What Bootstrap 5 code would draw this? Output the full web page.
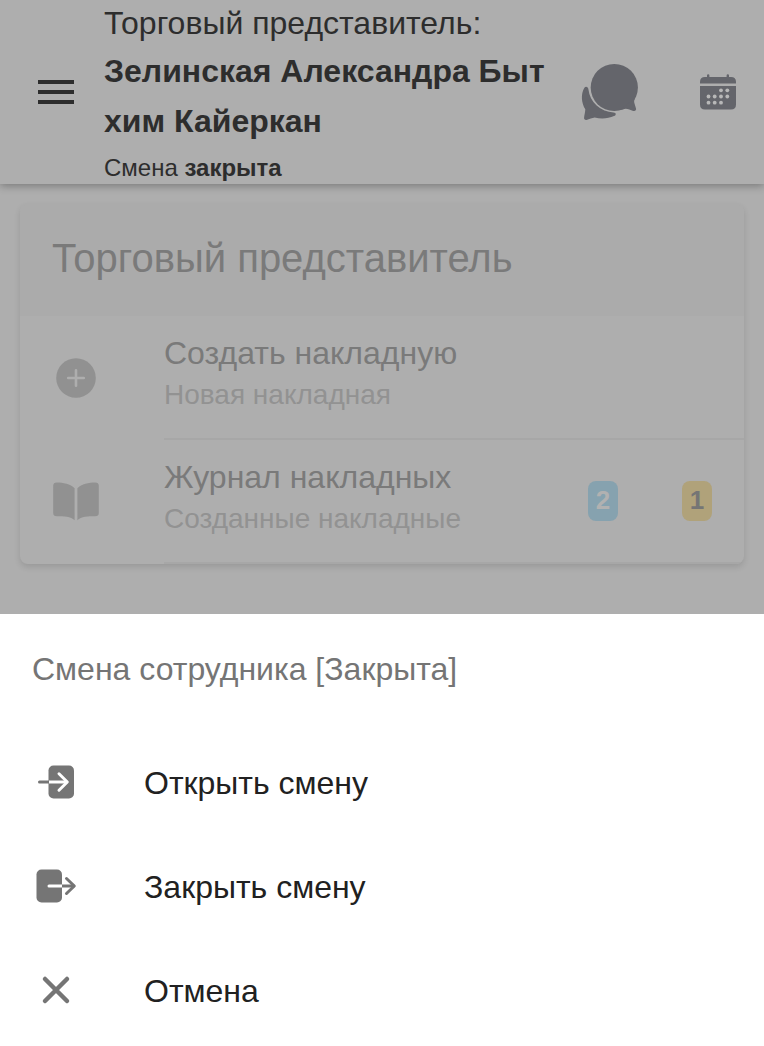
<!DOCTYPE html>
<html lang="ru">
<head>
<meta charset="utf-8">
<meta name="viewport" content="width=device-width, initial-scale=1">
<title>Торговый представитель</title>
<link rel="stylesheet" href="https://cdn.jsdelivr.net/npm/bootstrap@5.3.0/dist/css/bootstrap.min.css">
<style>
  body { font-family: "Liberation Sans", Arial, sans-serif; background: #aeaeae; color: #2d2d2d; font-size: 32px; line-height: 50px; }
  button { border: 0; background: none; padding: 0; color: inherit; }
  svg { display: block; fill: currentColor; }
  .topbar { box-shadow: 0 2px 8px rgba(0,0,0,.3); padding: 0 28px 0 32px; }
  .menu-btn { width: 48px; margin-right: 24px; }
  .role { line-height: 46px; }
  .shift { font-size: 24px; line-height: 32px; padding-top: 6px; }
  .tool { color: #64656b; }
  .tools { gap: 60px; }
  .content { padding: 20px 20px 50px; }
  .panel { border: 0; border-radius: 8px; background: #aeaeae; color: #7a7a7a; box-shadow: 0 3px 6px rgba(0,0,0,.12); overflow: hidden; }
  .panel-title { background: #ababab; font-size: 40px; line-height: 48px; font-weight: 400; margin: 0; padding: 30px 32px 34px; }
  .entry { color: inherit; padding-left: 32px; }
  .entry-icon { width: 48px; margin-right: 64px; color: #919191; }
  .entry-body { border-bottom: 2px solid #a7a7a7; padding: 19px 32px 19px 0; }
  .entry-name { line-height: 36px; }
  .entry-note { font-size: 28px; line-height: 48px; color: #929292; }
  .counts { gap: 64px; }
  .count { width: 30px; height: 40px; padding: 0; border-radius: 8px; font-size: 26px; line-height: 38px; }
  .count-new { background: #86a2af; color: #b1b1b1; }
  .count-wait { background: #b0a27a; color: #757575; }
  .sheet { background: #fff; color: #212121; padding-bottom: 3px; }
  .sheet-title { color: #757575; font-size: 32px; font-weight: 400; line-height: 50px; margin: 0; padding: 30px 32px 37px; }
  .sheet-item { height: 104px; padding: 0 32px; gap: 64px; }
  .sheet-item svg { color: #757575; }
</style>
</head>
<body>
<div class="d-flex flex-column min-vh-100">
  <header class="topbar d-flex align-items-center">
    <button class="menu-btn flex-shrink-0" type="button" aria-label="Меню">
      <svg width="48" height="48" viewBox="0 0 48 48"><path d="M6 12h36v4H6zM6 22h36v4H6zM6 32h36v4H6z"/></svg>
    </button>
    <div class="flex-grow-1">
      <div class="role">Торговый представитель:</div>
      <div class="fw-bold">Зелинская Александра Быт<br>хим Кайеркан</div>
      <div class="shift">Смена <b>закрыта</b></div>
    </div>
    <div class="tools d-flex align-items-center">
      <button class="tool" type="button" aria-label="Сообщения">
        <svg width="60" height="60" viewBox="0 0 60 60"><circle cx="34.300" cy="25.500" r="23.600"/><path d="M55 36c-1.200 2.400-.9 4-.5 5.500l1.500 5c.5 1.900-.9 2.800-2.700 2.400-3-.6-5.800-2.400-8-2.100L40 48z"/><path d="M4.400 25.700c1.300-1.600 3.900-.9 4 1.600A26 26 0 0 0 33.500 50.400c2.900.1 3 2.500.5 3.700-5.500 2.600-13.200 3.200-19.300 1.400-2.500.3-5.400 1.900-8.200 2.400-1.600.3-2.700-.9-2.400-2.500.4-3 1-5 1.200-8.200C1.500 41.500.5 32 4.400 25.700z"/></svg>
      </button>
      <button class="tool" type="button" aria-label="Календарь">
        <svg width="36" height="48" viewBox="0 0 36 48"><path d="M0 15.500V14q0-5 5-5h2V7.500a1.200 1.200 0 0 1 2.400 0V9h17.200V7.500a1.200 1.200 0 0 1 2.400 0V9h2q5 0 5 5v1.500zM0 18h36v18.500q0 5-5 5H5q-5 0-5-5z"/><g fill="#b8b8b8"><circle cx="21" cy="22.300" r="1.900"/><circle cx="27.300" cy="22.300" r="1.900"/><circle cx="8.500" cy="28.500" r="1.900"/><circle cx="14.700" cy="28.500" r="1.900"/><circle cx="21" cy="28.500" r="1.900"/><circle cx="27.300" cy="28.500" r="1.900"/><circle cx="8.500" cy="34.700" r="1.900"/><circle cx="14.700" cy="34.700" r="1.900"/><circle cx="21" cy="34.700" r="1.900"/></g></svg>
      </button>
    </div>
  </header>

  <main class="content flex-grow-1">
    <section class="panel card">
      <h1 class="panel-title">Торговый представитель</h1>
      <a class="entry d-flex align-items-center text-decoration-none" href="#new">
        <span class="entry-icon flex-shrink-0"><svg width="48" height="48" viewBox="0 0 48 48"><circle cx="24" cy="24" r="19.800"/><path d="M24 16.200v15.600M16.200 24h15.600" fill="none" stroke="#aeaeae" stroke-width="2.600" stroke-linecap="round"/></svg></span>
        <span class="entry-body flex-grow-1">
          <span class="entry-name d-block">Создать накладную</span>
          <span class="entry-note d-block">Новая накладная</span>
        </span>
      </a>
      <a class="entry d-flex align-items-center text-decoration-none" href="#journal">
        <span class="entry-icon flex-shrink-0"><svg width="48" height="48" viewBox="0 0 48 48"><path d="M22.600 10.300C18.500 5.800 11 4.400 4.800 4.400Q1.200 4.400 1.200 7.800v27.300q0 3.200 3.600 3.200c7 0 14 .3 17.800 4zM25.400 10.300C29.500 5.800 37 4.400 43.200 4.400q3.600 0 3.600 3.400v27.300q0 3.200-3.600 3.200c-7 0-14 .3-17.800 4z"/></svg></span>
        <span class="entry-body flex-grow-1 d-flex align-items-center justify-content-between">
          <span>
            <span class="entry-name d-block">Журнал накладных</span>
            <span class="entry-note d-block">Созданные накладные</span>
          </span>
          <span class="counts d-flex">
            <span class="count count-new badge">2</span>
            <span class="count count-wait badge">1</span>
          </span>
        </span>
      </a>
    </section>
  </main>

  <section class="sheet" role="dialog" aria-labelledby="sheet-title">
    <h2 class="sheet-title" id="sheet-title">Смена сотрудника [Закрыта]</h2>
    <button class="sheet-item d-flex align-items-center w-100 text-start" type="button">
      <svg width="48" height="48" viewBox="0 1 48 48"><rect x="16.500" y="7.500" width="25.500" height="33" rx="5"/><g fill="none" stroke-width="3" stroke-linecap="round" stroke-linejoin="round"><path d="M7.500 24H17" stroke="currentColor"/><path d="M17 24h18" stroke="#fff" stroke-linecap="butt"/><path d="M27 15.800l8.300 8.200-8.300 8.200" stroke="#fff"/></g></svg>
      Открыть смену
    </button>
    <button class="sheet-item d-flex align-items-center w-100 text-start" type="button">
      <svg width="48" height="48" viewBox="0 1 48 48"><rect x="4.500" y="7.500" width="25.500" height="33" rx="5"/><g fill="none" stroke-width="3" stroke-linecap="round" stroke-linejoin="round"><path d="M17 24h13" stroke="#fff"/><path d="M30 24h12.300" stroke="currentColor" stroke-linecap="butt"/><path d="M34.500 16.500l7.800 7.500-7.800 7.500" stroke="currentColor"/></g></svg>
      Закрыть смену
    </button>
    <button class="sheet-item d-flex align-items-center w-100 text-start" type="button">
      <svg width="48" height="48" viewBox="0 1 48 48"><path d="M13 13l22 22M35 13L13 35" fill="none" stroke="currentColor" stroke-width="4.500" stroke-linecap="round"/></svg>
      Отмена
    </button>
  </section>
</div>
<script src="https://cdn.jsdelivr.net/npm/bootstrap@5.3.0/dist/js/bootstrap.bundle.min.js"></script>
</body>
</html>
